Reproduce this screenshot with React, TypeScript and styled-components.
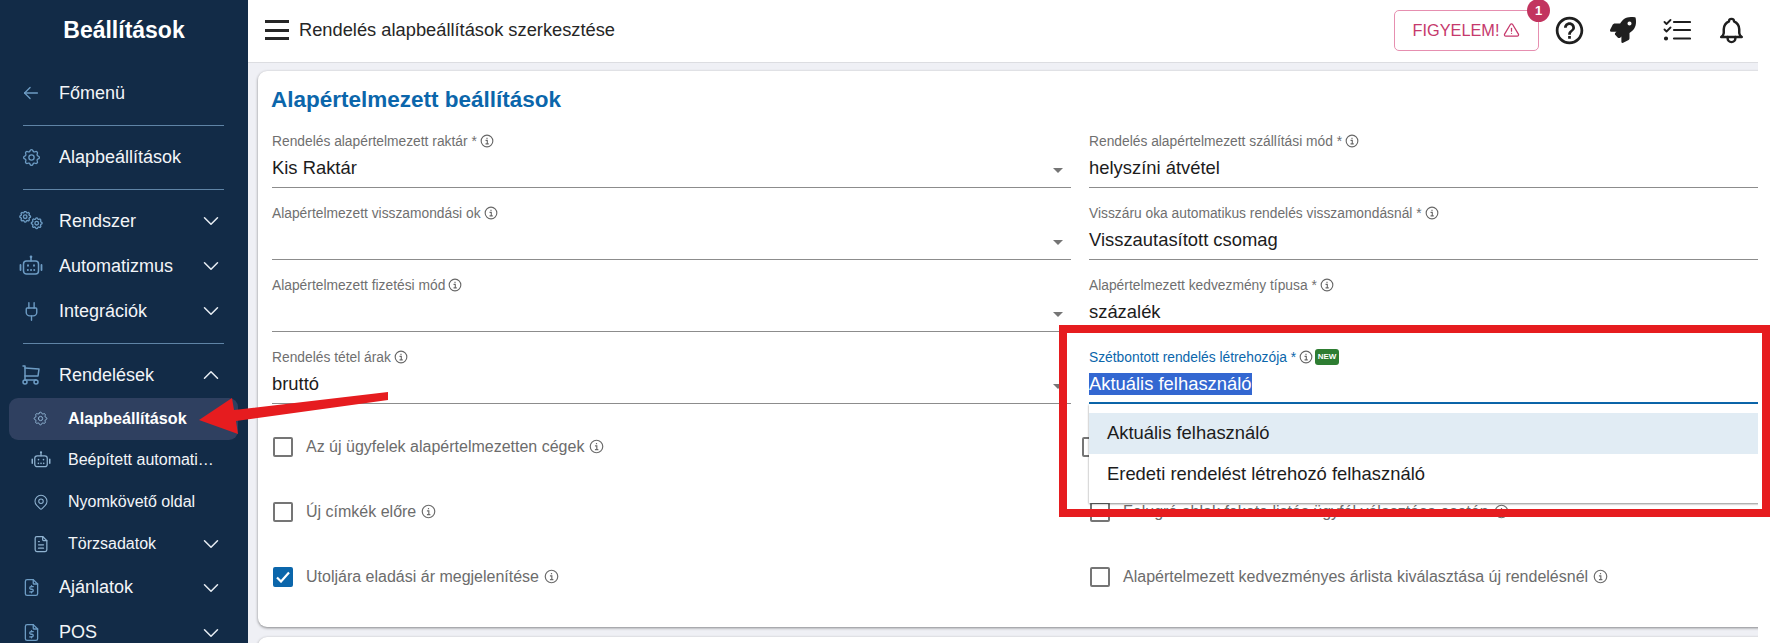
import React from 'react';
import styled, { createGlobalStyle } from 'styled-components';
import { FaRocket } from 'react-icons/fa';
import { MdHelpOutline } from 'react-icons/md';
import { Plug } from 'lucide-react';
import {
  TbAlertTriangle,
  TbArrowLeft,
  TbBell,
  TbChevronDown,
  TbChevronUp,
  TbFileDollar,
  TbFileText,
  TbMapPin,
  TbSettings,
  TbShoppingCart,
} from 'react-icons/tb';

const GEAR =
  'M10.325 4.317c.426 -1.756 2.924 -1.756 3.35 0a1.724 1.724 0 0 0 2.573 1.066c1.543 -.94 3.31 .826 2.37 2.37a1.724 1.724 0 0 0 1.065 2.572c1.756 .426 1.756 2.924 0 3.35a1.724 1.724 0 0 0 -1.066 2.573c.94 1.543 -.826 3.31 -2.37 2.37a1.724 1.724 0 0 0 -2.572 1.065c-.426 1.756 -2.924 1.756 -3.35 0a1.724 1.724 0 0 0 -2.573 -1.066c-1.543 .94 -3.31 -.826 -2.37 -2.37a1.724 1.724 0 0 0 -1.065 -2.572c-1.756 -.426 -1.756 -2.924 0 -3.35a1.724 1.724 0 0 0 1.066 -2.573c-.94 -1.543 .826 -3.31 2.37 -2.37c1 .608 2.296 .07 2.572 -1.065z';

const GlobalStyle = createGlobalStyle`
  html, body {
    margin: 0;
    padding: 0;
    background: #fff;
  }
  * {
    box-sizing: border-box;
  }
  body {
    font-family: "Liberation Sans", Arial, sans-serif;
  }
`;

const Page = styled.div`
  position: relative;
  display: flex;
  width: 1770px;
  height: 643px;
  overflow: hidden;
  background: #fff;
`;

/* sidebar */
const Sidebar = styled.aside`
  flex: 0 0 248px;
  height: 643px;
  overflow: hidden;
  background: #122b47;
  color: #f2f5f8;
`;

const SideTitle = styled.div`
  height: 60px;
  line-height: 60px;
  text-align: center;
  font-size: 23px;
  font-weight: 700;
  color: #fff;
`;

const SideNav = styled.nav`
  padding-top: 11px;
`;

const SideDivider = styled.hr`
  height: 1px;
  margin: 10px 24px 9px 23px;
  border: 0;
  background: #5f84a6;
`;

const SideRow = styled.div`
  display: flex;
  align-items: center;
  height: 44px;
  margin-bottom: 1px;
  font-size: 18px;
`;

const SideIcon = styled.span`
  display: flex;
  justify-content: center;
  align-items: center;
  flex: 0 0 59px;
  padding-left: 3px;
  color: #6d9cc4;
  svg {
    display: block;
  }
`;

const SideLabel = styled.span`
  flex: 1;
  min-width: 0;
  white-space: nowrap;
  overflow: hidden;
  text-overflow: ellipsis;
`;

const SideChevron = styled.span`
  display: flex;
  flex: 0 0 50px;
  color: #e6ecf2;
`;

const SubList = styled.div`
  margin-top: 0;
  margin-bottom: 1px;
`;

const SubRow = styled.div<{ $active?: boolean }>`
  display: flex;
  align-items: center;
  height: 41.67px;
  margin-left: 9px;
  margin-right: 10px;
  border-radius: 9px;
  background: ${(p) => (p.$active ? '#2f4060' : 'transparent')};
  font-size: ${(p) => (p.$active ? '16.2px' : '16px')};
  font-weight: ${(p) => (p.$active ? 700 : 400)};
  color: ${(p) => (p.$active ? '#fff' : '#f2f5f8')};
  ${SideIcon} {
    padding-left: 4px;
    color: #8fb2d0;
  }
  ${SideLabel} {
    flex: 0 0 150px;
  }
  ${SideChevron} {
    flex: 0 0 auto;
    margin-left: -20px;
  }
`;

/* main part, the capture stops at 1758px */
const Main = styled.main`
  flex: 0 0 1510px;
  height: 643px;
  overflow: hidden;
  display: flex;
  flex-direction: column;
`;

const TopBar = styled.header`
  display: flex;
  align-items: center;
  flex: 0 0 63px;
  padding-left: 17px;
  padding-bottom: 2px;
  background: #fff;
  border-bottom: 1px solid #dcdde1;
`;

const Hamburger = styled.span`
  display: block;
  width: 24px;
  height: 20px;
  margin-right: 10px;
  border-top: 3px solid #262626;
  border-bottom: 3px solid #262626;
  position: relative;
  &::after {
    content: '';
    position: absolute;
    left: 0;
    right: 0;
    top: 5.5px;
    height: 3px;
    background: #262626;
  }
`;

const TopTitle = styled.h1`
  flex: 1;
  margin: 0;
  font-size: 18.3px;
  font-weight: 400;
  color: #262626;
`;

const AlertButton = styled.button`
  position: relative;
  display: flex;
  align-items: center;
  justify-content: center;
  gap: 4px;
  width: 145px;
  height: 41px;
  margin-right: 3px;
  padding: 0;
  font-family: inherit;
  font-size: 16.3px;
  color: #c6396c;
  background: #fff;
  border: 1px solid #e68fb0;
  border-radius: 5px;
`;

const Badge = styled.span`
  position: absolute;
  top: -12px;
  right: -12px;
  width: 23px;
  height: 23px;
  line-height: 23px;
  border-radius: 50%;
  background: #c2345f;
  color: #fff;
  font-size: 13px;
  font-weight: 700;
  text-align: center;
`;

const TopIcon = styled.span`
  display: flex;
  align-items: center;
  justify-content: center;
  flex: 0 0 54px;
  color: #1f1f1f;
`;

const Content = styled.div`
  flex: 1;
  padding: 8px 0 0 10px;
  background: #eff0f5;
`;

const Card = styled.section`
  width: 1640px;
  height: 556px;
  padding: 14px 0 0 14px;
  background: #fff;
  border-radius: 9px;
  box-shadow: 0 1px 3px rgba(0, 0, 0, 0.45);
`;

const EmptyCard = styled(Card)`
  margin-top: 10px;
  height: 60px;
`;

const CardTitle = styled.h2`
  margin: 0 0 1px -1px;
  height: 30px;
  line-height: 30px;
  font-size: 22.5px;
  font-weight: 700;
  color: #0b66ab;
`;

const FormGrid = styled.div`
  display: grid;
  grid-template-columns: 799px 799px;
  column-gap: 18px;
`;

const Field = styled.div<{ $focused?: boolean }>`
  position: relative;
  height: 72px;
  padding-top: 17px;
  border-bottom: ${(p) => (p.$focused ? '2px solid #0b66ab' : '1px solid #8c8c8c')};
`;

const FieldLabel = styled.label<{ $focused?: boolean }>`
  display: flex;
  align-items: center;
  gap: 3px;
  height: 16px;
  font-size: 13.8px;
  color: ${(p) => (p.$focused ? '#0b66ab' : '#6f6f6f')};
  svg {
    color: #666;
  }
`;

const FieldValue = styled.div`
  display: flex;
  align-items: center;
  height: 30px;
  margin-top: 4px;
  padding-right: 8px;
  font-size: 18.4px;
  color: #1c1c1c;
`;

const Caret = styled.i`
  display: block;
  width: 0;
  height: 0;
  margin-top: 4px;
  margin-left: auto;
  border-left: 5.5px solid transparent;
  border-right: 5.5px solid transparent;
  border-top: 5.5px solid #757575;
`;

const Selected = styled.span`
  background: #3367d1;
  color: #fff;
`;

const NewTag = styled.span`
  display: inline-block;
  width: 24px;
  height: 16px;
  margin-left: -1px;
  line-height: 16px;
  border-radius: 3px;
  background: #2e7d32;
  color: #fff;
  font-size: 8px;
  font-weight: 700;
  text-align: center;
`;

const Dropdown = styled.ul`
  position: absolute;
  z-index: 5;
  top: 72px;
  left: 0;
  right: 0;
  height: 99px;
  margin: 0;
  padding: 9px 0 0;
  list-style: none;
  background: #fff;
  box-shadow: 0 1px 2px rgba(0, 0, 0, 0.45);
`;

const Option = styled.li<{ $selected?: boolean }>`
  height: 41px;
  line-height: 40px;
  padding-left: 18px;
  font-size: 18.4px;
  color: #1c1c1c;
  background: ${(p) => (p.$selected ? '#e1ecf4' : '#fff')};
`;

const CheckGrid = styled(FormGrid)`
  margin-top: 10px;
`;

const CheckRow = styled.div<{ $shift?: number }>`
  display: flex;
  align-items: center;
  height: 65px;
  padding-left: 1px;
  margin-left: ${(p) => p.$shift ?? 0}px;
  font-size: 16px;
  color: #6c6c6c;
  svg {
    flex: none;
  }
`;

const Box = styled.span<{ $checked?: boolean }>`
  display: flex;
  align-items: center;
  justify-content: center;
  flex: 0 0 20px;
  height: 20px;
  margin-right: 13px;
  border-radius: 2px;
  border: 2px solid ${(p) => (p.$checked ? '#0b66ab' : '#757575')};
  background: ${(p) => (p.$checked ? '#0b66ab' : '#fff')};
`;

const CheckText = styled.span`
  margin-right: 5px;
`;

/* annotations on top of the screenshot */
const RedBox = styled.div`
  position: absolute;
  z-index: 10;
  left: 1059px;
  top: 325px;
  width: 711px;
  height: 192px;
  border: 8px solid #e61c1f;
  pointer-events: none;
`;

const RedArrow = styled.svg`
  position: absolute;
  z-index: 10;
  left: 190px;
  top: 385px;
  pointer-events: none;
`;

function InfoIcon({ size = 14 }: { size?: number }) {
  return (
    <svg width={size} height={size} viewBox="0 0 24 24" fill="none" stroke="currentColor" strokeWidth="1.9">
      <circle cx="12" cy="12" r="10" />
      <path d="M12 6.5v2M9.5 11H12.5V17M9.5 17H15" />
    </svg>
  );
}

function DoubleGear() {
  return (
    <svg width="24" height="20" viewBox="0 0 24 20" fill="none" stroke="currentColor" strokeLinecap="round" strokeLinejoin="round">
      <g transform="translate(-1,-1.5) scale(0.6)">
        <path d={GEAR} strokeWidth="2.2" />
        <circle cx="12" cy="12" r="3" strokeWidth="2.2" />
      </g>
      <g transform="translate(10.5,5) scale(0.6)">
        <path d={GEAR} strokeWidth="2.2" />
        <circle cx="12" cy="12" r="3" strokeWidth="2.2" />
      </g>
    </svg>
  );
}

function RobotIcon({ size }: { size: number }) {
  return (
    <svg width={size} height={size} viewBox="0 0 24 24" fill="none" stroke="currentColor" strokeWidth="1.5" strokeLinecap="round">
      <rect x="4.5" y="7" width="15" height="13" rx="3" />
      <path d="M12 7V3.5" />
      <path d="M1.5 11v5M22.5 11v5" strokeWidth="1.8" />
      <circle cx="12" cy="2.8" r="0.6" fill="currentColor" />
      <path d="M9 11.3v.4M15 11.3v.4M8.8 16h.1M12 16h.1M15.2 16h.1" strokeWidth="1.9" />
    </svg>
  );
}

function ChecklistIcon() {
  return (
    <svg width="28" height="22" viewBox="0 0 28 22" fill="none" stroke="currentColor" strokeWidth="2.2" strokeLinecap="round" strokeLinejoin="round">
      <path d="M1.5 3L3.5 5L7.5 1M1.5 10.5L3.5 12.5L7.5 8.5" strokeWidth="1.8" />
      <path d="M11 3H27M11 11H27M11 19.5H27" />
      <circle cx="3" cy="19.5" r="1" fill="currentColor" />
    </svg>
  );
}

function SideItem({ icon, label, chevron }: { icon: React.ReactNode; label: string; chevron?: 'up' | 'down' }) {
  return (
    <SideRow>
      <SideIcon>{icon}</SideIcon>
      <SideLabel>{label}</SideLabel>
      {chevron && (
        <SideChevron>{chevron === 'up' ? <TbChevronUp size={26} strokeWidth={1.4} /> : <TbChevronDown size={26} strokeWidth={1.4} />}</SideChevron>
      )}
    </SideRow>
  );
}

const fields = [
  { label: 'Rendelés alapértelmezett raktár *', value: 'Kis Raktár' },
  { label: 'Rendelés alapértelmezett szállítási mód *', value: 'helyszíni átvétel' },
  { label: 'Alapértelmezett visszamondási ok', value: '' },
  { label: 'Visszáru oka automatikus rendelés visszamondásnál *', value: 'Visszautasított csomag' },
  { label: 'Alapértelmezett fizetési mód', value: '' },
  { label: 'Alapértelmezett kedvezmény típusa *', value: 'százalék' },
  { label: 'Rendelés tétel árak', value: 'bruttó' },
];

const checks = [
  { label: 'Az új ügyfelek alapértelmezetten cégek' },
  { label: '', shift: -8 },
  { label: 'Új címkék előre' },
  { label: 'Felugró ablak fekete listás ügyfél választása esetén' },
  { label: 'Utoljára eladási ár megjelenítése', checked: true },
  { label: 'Alapértelmezett kedvezményes árlista kiválasztása új rendelésnél' },
];

export default function App() {
  return (
    <Page>
      <GlobalStyle />
      <Sidebar>
        <SideTitle>Beállítások</SideTitle>
        <SideNav>
          <SideItem icon={<TbArrowLeft size={22} strokeWidth={1.4} />} label="Főmenü" />
          <SideDivider />
          <SideItem icon={<TbSettings size={21} strokeWidth={1.5} />} label="Alapbeállítások" />
          <SideDivider />
          <SideItem icon={<DoubleGear />} label="Rendszer" chevron="down" />
          <SideItem icon={<RobotIcon size={24} />} label="Automatizmus" chevron="down" />
          <SideItem icon={<Plug size={21} strokeWidth={1.6} />} label="Integrációk" chevron="down" />
          <SideDivider />
          <SideItem icon={<TbShoppingCart size={24} strokeWidth={1.5} />} label="Rendelések" chevron="up" />
          <SubList>
            <SubRow $active>
              <SideIcon>
                <TbSettings size={17} strokeWidth={1.4} />
              </SideIcon>
              <SideLabel>Alapbeállítások</SideLabel>
            </SubRow>
            <SubRow>
              <SideIcon>
                <RobotIcon size={20} />
              </SideIcon>
              <SideLabel>Beépített automatizmusok</SideLabel>
            </SubRow>
            <SubRow>
              <SideIcon>
                <TbMapPin size={18} strokeWidth={1.4} />
              </SideIcon>
              <SideLabel>Nyomkövető oldal</SideLabel>
            </SubRow>
            <SubRow>
              <SideIcon>
                <TbFileText size={20} strokeWidth={1.5} />
              </SideIcon>
              <SideLabel>Törzsadatok</SideLabel>
              <SideChevron>
                <TbChevronDown size={26} strokeWidth={1.4} />
              </SideChevron>
            </SubRow>
          </SubList>
          <SideItem icon={<TbFileDollar size={21} strokeWidth={1.5} />} label="Ajánlatok" chevron="down" />
          <SideItem icon={<TbFileDollar size={21} strokeWidth={1.5} />} label="POS" chevron="down" />
        </SideNav>
      </Sidebar>

      <Main>
        <TopBar>
          <Hamburger />
          <TopTitle>Rendelés alapbeállítások szerkesztése</TopTitle>
          <AlertButton>
            FIGYELEM!
            <TbAlertTriangle size={17} strokeWidth={1.8} />
            <Badge>1</Badge>
          </AlertButton>
          <TopIcon>
            <MdHelpOutline size={33} />
          </TopIcon>
          <TopIcon>
            <FaRocket size={26} />
          </TopIcon>
          <TopIcon>
            <ChecklistIcon />
          </TopIcon>
          <TopIcon>
            <TbBell size={31} strokeWidth={1.9} />
          </TopIcon>
        </TopBar>

        <Content>
          <Card>
            <CardTitle>Alapértelmezett beállítások</CardTitle>
            <FormGrid>
              {fields.map((f) => (
                <Field key={f.label}>
                  <FieldLabel>
                    {f.label} <InfoIcon />
                  </FieldLabel>
                  <FieldValue>
                    {f.value}
                    <Caret />
                  </FieldValue>
                </Field>
              ))}
              <Field $focused>
                <FieldLabel $focused>
                  Szétbontott rendelés létrehozója * <InfoIcon />
                  <NewTag>NEW</NewTag>
                </FieldLabel>
                <FieldValue>
                  <Selected>Aktuális felhasználó</Selected>
                </FieldValue>
                <Dropdown>
                  <Option $selected>Aktuális felhasználó</Option>
                  <Option>Eredeti rendelést létrehozó felhasználó</Option>
                </Dropdown>
              </Field>
            </FormGrid>
            <CheckGrid>
              {checks.map((c, i) => (
                <CheckRow key={i} $shift={c.shift}>
                  <Box $checked={c.checked}>
                    {c.checked && (
                      <svg width="14" height="12" viewBox="0 0 14 12" fill="none" stroke="#fff" strokeWidth="2.2">
                        <path d="M1 6.5L5 10.5L13 1.5" />
                      </svg>
                    )}
                  </Box>
                  {c.label && (
                    <>
                      <CheckText>{c.label}</CheckText>
                      <InfoIcon size={15} />
                    </>
                  )}
                </CheckRow>
              ))}
            </CheckGrid>
          </Card>
          <EmptyCard />
        </Content>
      </Main>

      <RedBox />
      <RedArrow width="200" height="50" viewBox="190 385 200 50">
        <path d="M199 420L232 398L234 410L388 392L388 400L236 421L238 434Z" fill="#e61c1f" />
      </RedArrow>
    </Page>
  );
}
